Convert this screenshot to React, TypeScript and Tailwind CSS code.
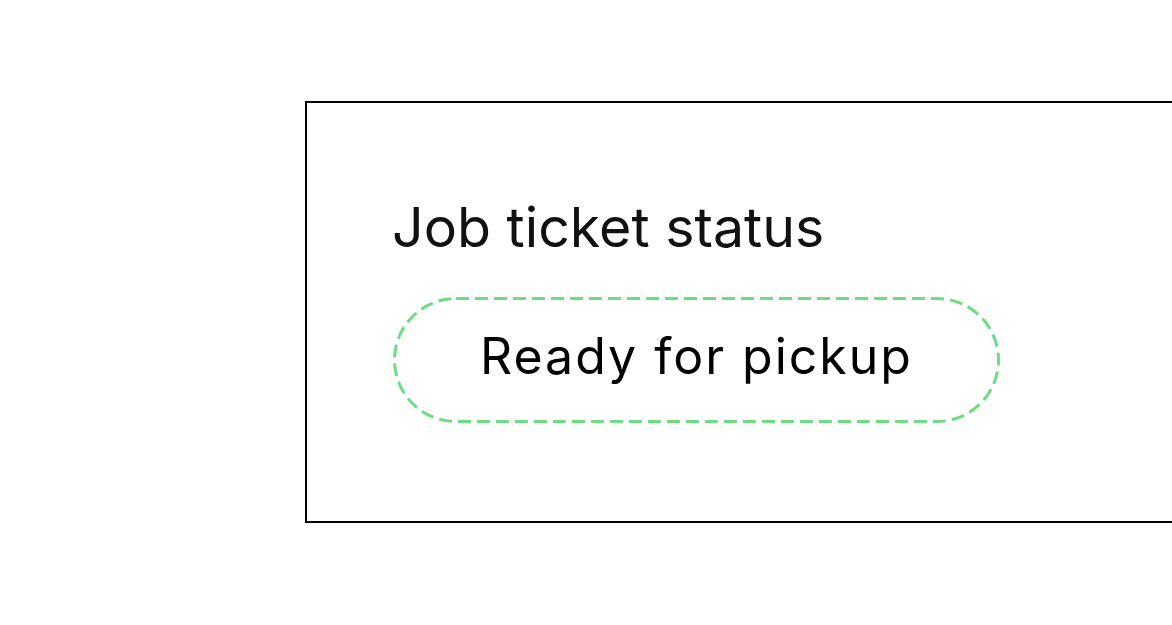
export default function App() {
  return (
    <div className="w-[1172px] h-[625px] overflow-hidden bg-white" style={{ fontFamily: 'Inter, "Noto Sans", sans-serif' }}>
      <div className="ml-[305px] mt-[101px] w-[1000px] h-[422px] border-2 border-black pl-[86px] pt-[96px]">
        <h1 className="text-[55.5px] leading-none font-normal text-[#111] h-[56px] -ml-[1px]">Job ticket status</h1>
        <div className="relative mt-[42px] w-[607px] h-[126px] rounded-full flex items-center justify-center pb-[8px]">
          <svg className="absolute inset-0" width="607" height="126" viewBox="0 0 607 126" fill="none">
            <rect x="1.5" y="1.5" width="604" height="123" rx="61.5" stroke="#6fdc85" strokeWidth="3" strokeDasharray="13 6" />
          </svg>
          <span className="relative text-[50px] leading-none tracking-[2px] text-black">Ready for pickup</span>
        </div>
      </div>
    </div>
  );
}
